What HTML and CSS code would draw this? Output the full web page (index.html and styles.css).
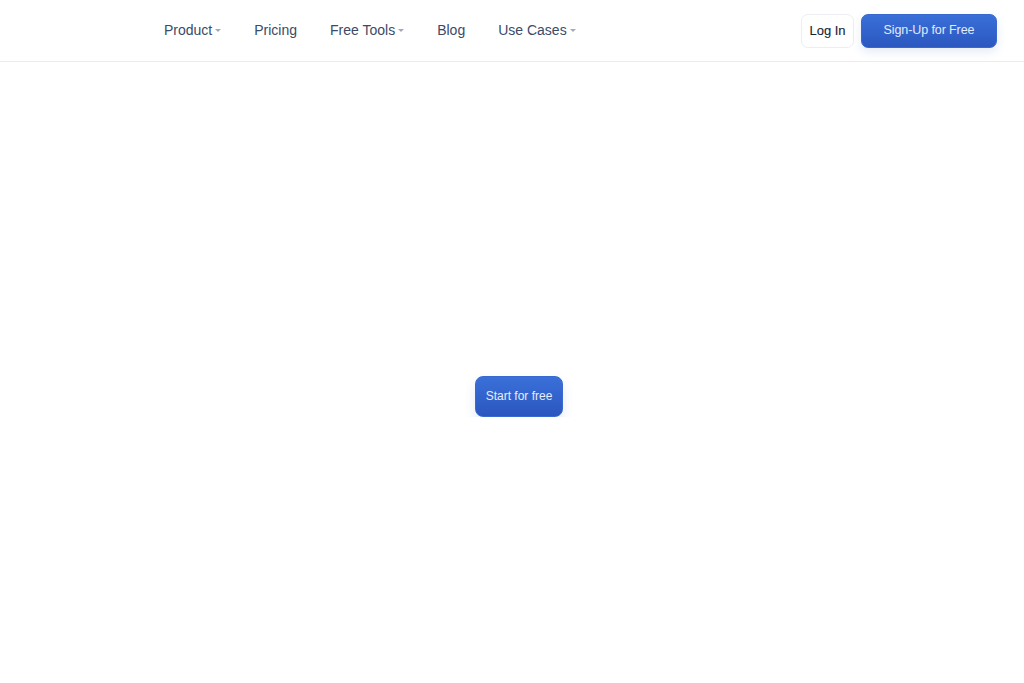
FILE: index.html
```html
<!DOCTYPE html>
<html>
<head>
<meta charset="utf-8">
<link rel="stylesheet" href="styles.css">
</head>
<body>
<header class="topbar">
  <nav class="nav">
    <a class="nav-item">Product<span class="caret"></span></a>
    <a class="nav-item">Pricing</a>
    <a class="nav-item">Free Tools<span class="caret"></span></a>
    <a class="nav-item">Blog</a>
    <a class="nav-item">Use Cases<span class="caret"></span></a>
  </nav>
  <div class="actions">
    <a class="btn-login">Log In</a>
    <a class="btn-signup">Sign-Up for Free</a>
  </div>
</header>
<main class="hero">
  <a class="btn-start">Start for free</a>
</main>
</body>
</html>
```
FILE: styles.css
```css
* { box-sizing: border-box; }
html, body { margin: 0; padding: 0; background: #fff; }
body { font-family: "Liberation Sans", Arial, sans-serif; color: #334155; }
a { text-decoration: none; cursor: pointer; }
.topbar {
  height: 62px;
  border-bottom: 1px solid #ececec;
  display: flex;
  align-items: center;
  justify-content: space-between;
  padding: 0 27px 0 164px;
}
.nav { display: flex; align-items: center; gap: 33px; margin-top: -1px; }
.nav-item {
  font-size: 14px;
  color: #3b4a66;
  display: flex;
  align-items: center;
}
.caret {
  display: inline-block;
  width: 0; height: 0;
  margin-left: 3px;
  border-left: 3.5px solid transparent;
  border-right: 3.5px solid transparent;
  border-top: 3.5px solid #a3abb8;
  margin-top: 1px;
}
.actions { display: flex; align-items: center; gap: 7px; margin-top: 0; }
.btn-login {
  height: 34px;
  width: 53px;
  display: flex; align-items: center; justify-content: center;
  border: 1px solid #eceef1;
  border-radius: 7px;
  font-size: 13px;
  color: #1a2233;
  background: #fff;
  -webkit-text-stroke: 0.1px #1a2233;
}
.btn-signup {
  height: 34px;
  width: 136px;
  display: flex; align-items: center; justify-content: center;
  border-radius: 7px;
  font-size: 12.5px;
  letter-spacing: -0.1px;
  color: #e3ebfb;
  background: linear-gradient(#3a6fd8, #2b57c0);
  border: 1px solid #3a68cf;
  box-shadow: 0 4px 10px rgba(43, 87, 192, 0.12);
  padding-bottom: 1px;
}
.hero {
  display: flex;
  justify-content: center;
  padding-top: 314px;
  padding-left: 14px;
}
.btn-start {
  height: 41px;
  width: 88px;
  display: flex; align-items: center; justify-content: center;
  border-radius: 8px;
  font-size: 12px;
  color: #e6edfb;
  background: linear-gradient(#3a70d9, #2b56bf);
  border: 1px solid #3a69d0;
  box-shadow: 0 6px 12px rgba(43, 87, 192, 0.12);
  padding-bottom: 2px;
}
```
